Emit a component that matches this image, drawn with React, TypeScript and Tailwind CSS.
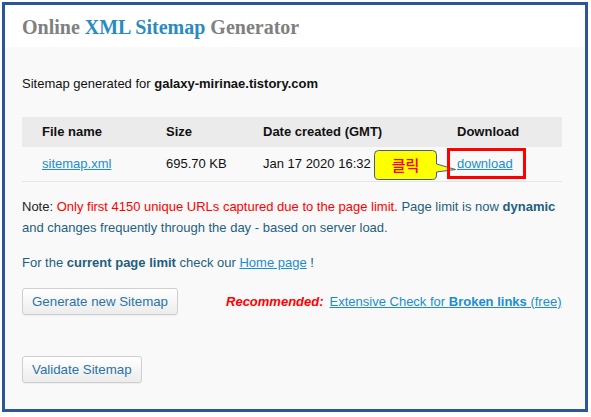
import React from 'react';

const Callout: React.FC = () => (
  <div className="absolute left-[352px] top-[3px] h-[30px] w-[84px]">
    <svg width="84" height="30" viewBox="0 0 84 30" className="absolute inset-0">
      <path
        d="M4.5 0.5 H58.5 Q62.5 0.5 62.5 4.5 V14 L81.5 19.5 L62.5 22 V25 Q62.5 29.5 58.5 29.5 H4.5 Q0.5 29.5 0.5 25 V4.5 Q0.5 0.5 4.5 0.5 Z"
        fill="#ffff00"
        stroke="#3f5d8c"
        strokeWidth="1"
      />
    </svg>
    <span className="absolute left-0 top-0 flex h-[30px] w-[63px] items-center justify-center text-[15px] font-medium text-[#ff0000] font-['Noto_Sans_CJK_KR',sans-serif]">
      클릭
    </span>
  </div>
);

const Button: React.FC<{ label: string }> = ({ label }) => (
  <button className="h-[27px] shrink-0 whitespace-nowrap rounded-[3px] border border-[#cfcfcf] bg-gradient-to-b from-white to-[#ececec] px-[9px] text-[13.3px] leading-[25px] text-[#2a74a8] shadow-[0_1px_1px_rgba(0,0,0,0.05)]">
    {label}
  </button>
);

export default function App() {
  return (
    <div className="h-[417px] w-[591px] bg-white pl-[2px] pt-[2px] font-['Liberation_Sans',Arial,sans-serif] text-[13px] text-[#222]">
      <div className="flex h-[410px] w-[586px] flex-col border-[3px] border-[#2b5797]">
        {/* Header */}
        <div className="h-[42px] bg-white pl-[17px] pt-[9px]">
          <h1 className="font-['Liberation_Serif',serif] text-[20px] font-bold leading-[26px] text-[#808080]">
            Online <span className="text-[#2a8bc0]">XML Sitemap</span> Generator
          </h1>
        </div>

        {/* Body */}
        <div className="flex-1 bg-[#f9f9f9] pl-[17px] pr-[23px]">
          <p className="pt-[28px] leading-[18px] text-[#111]">
            Sitemap generated for <b>galaxy-mirinae.tistory.com</b>
          </p>

          <div className="mt-[24px] w-[540px]">
            <div className="grid h-[30px] grid-cols-[124px_97px_194px_125px] items-center bg-[#ebebeb] font-bold text-[#111]">
              <div className="pl-[20px]">File name</div>
              <div className="pl-[20px]">Size</div>
              <div className="pl-[20px]">Date created (GMT)</div>
              <div className="pl-[20px]">Download</div>
            </div>
            <div className="relative grid h-[35px] grid-cols-[124px_97px_194px_125px] items-center border-b border-[#e6e6e6] text-[#111]">
              <div className="pl-[20px]">
                <a className="text-[#1b8dd0] underline">sitemap.xml</a>
              </div>
              <div className="pl-[20px]">695.70 KB</div>
              <div className="pl-[20px]">Jan 17 2020 16:32</div>
              <div className="pl-[20px]">
                <a className="text-[#1b8dd0] underline">download</a>
              </div>
              <Callout />
              <div className="absolute left-[425px] top-[1px] h-[31px] w-[79px] border-[3px] border-[#ff0000]" />
            </div>
          </div>

          <p className="mt-[14px] leading-[21px] text-[#1e5f80]">
            <span className="text-[#222]">Note: </span>
            <span className="text-[#ff0000]">Only first 4150 unique URLs captured due to the page limit.</span> Page limit is
            now <b>dynamic</b> and changes frequently through the day - based on server load.
          </p>

          <p className="mt-[14px] leading-[21px] text-[#1e5f80]">
            For the <b>current page limit</b> check our <a className="text-[#1b8dd0] underline">Home page</a> !
          </p>

          <div className="mt-[15px] flex items-center whitespace-nowrap">
            <Button label="Generate new Sitemap" />
            <span className="ml-[48px] font-bold italic text-[#ff0000]">Recommended:</span>
            <a className="ml-[6px] text-[#1b8dd0] underline">
              Extensive Check for <b>Broken links</b> (free)
            </a>
          </div>

          <div className="mt-[41px]">
            <Button label="Validate Sitemap" />
          </div>
        </div>
      </div>
    </div>
  );
}
